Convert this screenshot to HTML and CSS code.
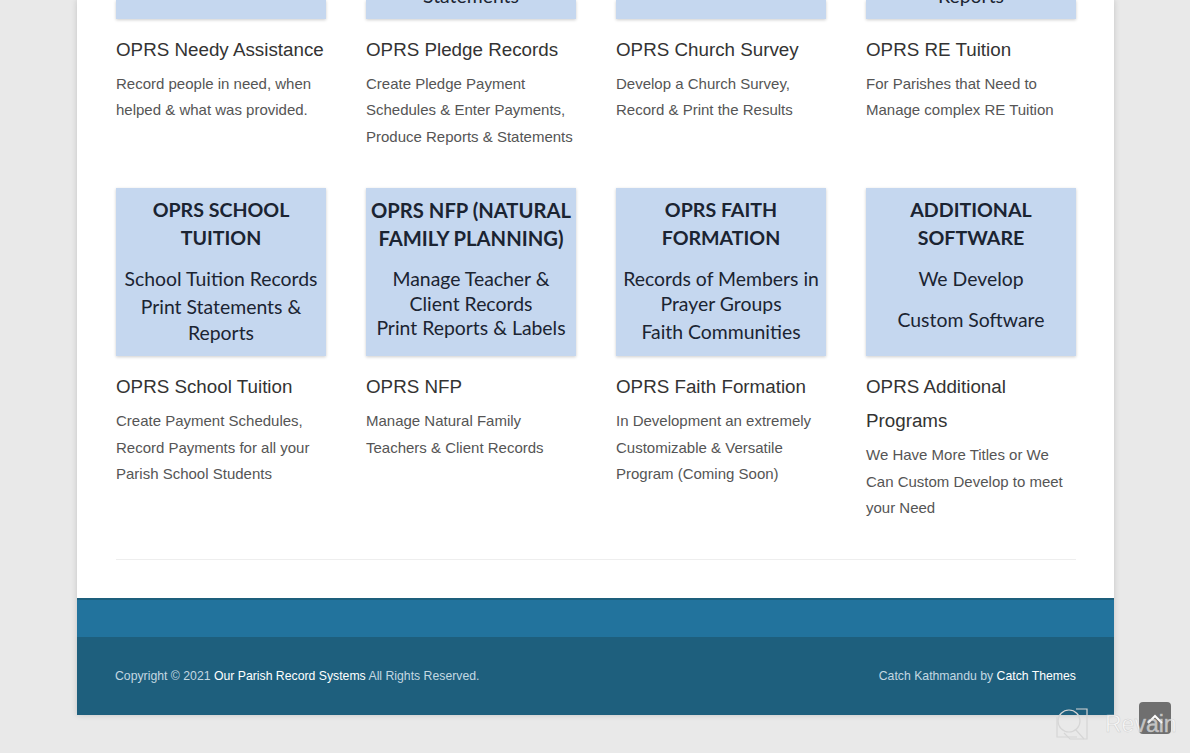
FILE: index.html
```html
<!DOCTYPE html>
<html lang="en">
<head>
    <meta charset="UTF-8">
    <meta name="viewport" content="width=device-width, initial-scale=1.0">
    <title>Our Parish Record Systems</title>
    <link rel="stylesheet" href="styles.css">
</head>
<body>
    <div class="page">
        <div class="content">
            <div class="products">
                <!-- First row, scrolled past the top of the window -->
                <div class="product">
                    <div class="thumb thumb-cut"></div>
                    <h3>OPRS Needy Assistance</h3>
                    <p>Record people in need, when helped &amp; what was provided.</p>
                </div>
                <div class="product">
                    <div class="thumb thumb-cut"><div class="thumb-line">Statements</div></div>
                    <h3>OPRS Pledge Records</h3>
                    <p>Create Pledge Payment Schedules &amp; Enter Payments, Produce Reports &amp; Statements</p>
                </div>
                <div class="product">
                    <div class="thumb thumb-cut"></div>
                    <h3>OPRS Church Survey</h3>
                    <p>Develop a Church Survey, Record &amp; Print the Results</p>
                </div>
                <div class="product">
                    <div class="thumb thumb-cut"><div class="thumb-line">Reports</div></div>
                    <h3>OPRS RE Tuition</h3>
                    <p>For Parishes that Need to Manage complex RE Tuition</p>
                </div>

                <!-- Second row -->
                <div class="product">
                    <div class="thumb">
                        <div class="thumb-title">OPRS SCHOOL</div>
                        <div class="thumb-title">TUITION</div>
                        <div class="thumb-line first">School Tuition Records</div>
                        <div class="thumb-line wide">Print Statements &amp;</div>
                        <div class="thumb-line">Reports</div>
                    </div>
                    <h3>OPRS School Tuition</h3>
                    <p>Create Payment Schedules, Record Payments for all your Parish School Students</p>
                </div>
                <div class="product">
                    <div class="thumb">
                        <div class="thumb-title long">OPRS NFP (NATURAL</div>
                        <div class="thumb-title long">FAMILY PLANNING)</div>
                        <div class="thumb-line first">Manage Teacher &amp;</div>
                        <div class="thumb-line tight">Client Records</div>
                        <div class="thumb-line tighter">Print Reports &amp; Labels</div>
                    </div>
                    <h3>OPRS NFP</h3>
                    <p>Manage Natural Family Teachers &amp; Client Records</p>
                </div>
                <div class="product">
                    <div class="thumb">
                        <div class="thumb-title">OPRS FAITH</div>
                        <div class="thumb-title">FORMATION</div>
                        <div class="thumb-line first">Records of Members in</div>
                        <div class="thumb-line tight">Prayer Groups</div>
                        <div class="thumb-line wide">Faith Communities</div>
                    </div>
                    <h3>OPRS Faith Formation</h3>
                    <p>In Development an extremely Customizable &amp; Versatile Program (Coming Soon)</p>
                </div>
                <div class="product">
                    <div class="thumb">
                        <div class="thumb-title">ADDITIONAL</div>
                        <div class="thumb-title">SOFTWARE</div>
                        <div class="thumb-line first">We Develop</div>
                        <div class="thumb-line spaced">Custom Software</div>
                    </div>
                    <h3>OPRS Additional Programs</h3>
                    <p>We Have More Titles or We Can Custom Develop to meet your Need</p>
                </div>
            </div>
            <hr class="divider">
        </div>

        <div class="footer-top"></div>
        <div class="footer-bottom">
            <div>Copyright &copy; 2021 <a href="#">Our Parish Record Systems</a> All Rights Reserved.</div>
            <div>Catch Kathmandu by <a href="#">Catch Themes</a></div>
        </div>
    </div>

    <a class="scroll-up" href="#">
        <svg width="18" height="12" viewBox="0 0 18 12"><path d="M2 10 L9 3 L16 10" fill="none" stroke="#fff" stroke-width="2"/></svg>
    </a>

    <div class="watermark">
        <svg width="34" height="34" viewBox="0 0 34 34" fill="none" stroke="#d6d6d6" stroke-width="1.2">
            <path d="M21 2 H32 V32 H15 L9 26"/>
            <path d="M2 10 V30 H22"/>
            <circle cx="14" cy="14" r="11"/>
            <path d="M21 23 L29 32"/>
        </svg>
        <span>Revain</span>
    </div>
</body>
</html>
```

FILE: styles.css
```css
* {
    margin: 0;
    padding: 0;
    box-sizing: border-box;
}

html, body {
    height: 100%;
    overflow: hidden;
}

body {
    background: #e9e9e9;
    font-family: "Liberation Sans", Arial, sans-serif;
    position: relative;
}

.page {
    width: 1037px;
    margin-left: 77px;
    background: #fff;
    box-shadow: 0 0 6px rgba(0,0,0,0.16);
}

.content {
    padding: 0 38px 38px 39px;
}

.products {
    display: grid;
    grid-template-columns: repeat(4, 210px);
    column-gap: 40px;
    row-gap: 38px;
}

.product h3 {
    margin-top: 14px;
    font-size: 18.8px;
    font-weight: 400;
    line-height: 34px;
    color: #333;
}

.product p {
    margin-top: 4px;
    font-size: 15px;
    line-height: 26.4px;
    color: #555;
}

/* Product pictures */
.thumb {
    height: 168px;
    padding-top: 8px;
    background: #c5d7ef;
    box-shadow: 0 1px 3px rgba(0,0,0,0.2);
    font-family: Lato, "Open Sans", sans-serif;
    color: #1b2432;
    text-align: center;
    white-space: nowrap;
    overflow: hidden;
}

.thumb-cut {
    height: 19px;
    padding-top: 0;
    display: flex;
    flex-direction: column;
    justify-content: flex-end;
    padding-bottom: 10px;
}

.thumb-title {
    font-size: 19.6px;
    font-weight: 700;
    line-height: 28px;
}

.thumb-title.long {
    font-size: 20.2px;
}

.thumb-line {
    font-size: 19.4px;
    line-height: 26px;
}

.thumb-cut .thumb-line {
    flex-shrink: 0;
}

.thumb-line.first { margin-top: 14px; }
.thumb-line.wide { margin-top: 2px; }
.thumb-line.tight { margin-top: -1px; }
.thumb-line.tighter { margin-top: -2px; }
.thumb-line.spaced { margin-top: 15px; }

.divider {
    margin-top: 38px;
    border: none;
    border-top: 1px solid #eee;
}

/* Footer */
.footer-top {
    height: 39px;
    background: #22739d;
    border-top: 2px solid #1d5f7c;
}

.footer-bottom {
    height: 78px;
    padding: 0 38px;
    display: flex;
    justify-content: space-between;
    align-items: center;
    background: #1e5f7d;
    font-size: 12.25px;
    color: #c3d8e2;
}

.footer-bottom a {
    color: #fff;
    text-decoration: none;
}

.scroll-up {
    position: absolute;
    left: 1139px;
    top: 702px;
    width: 32px;
    height: 32px;
    display: flex;
    align-items: flex-start;
    justify-content: center;
    padding-top: 11px;
    background: #6f6f6f;
    border-radius: 4px;
}

.watermark {
    position: absolute;
    left: 1055px;
    top: 707px;
    display: flex;
    align-items: center;
    gap: 16px;
    font-size: 23px;
    color: rgba(255,255,255,0.6);
}

.watermark span {
    -webkit-text-stroke: 0.5px rgba(200,200,200,0.8);
}
```
